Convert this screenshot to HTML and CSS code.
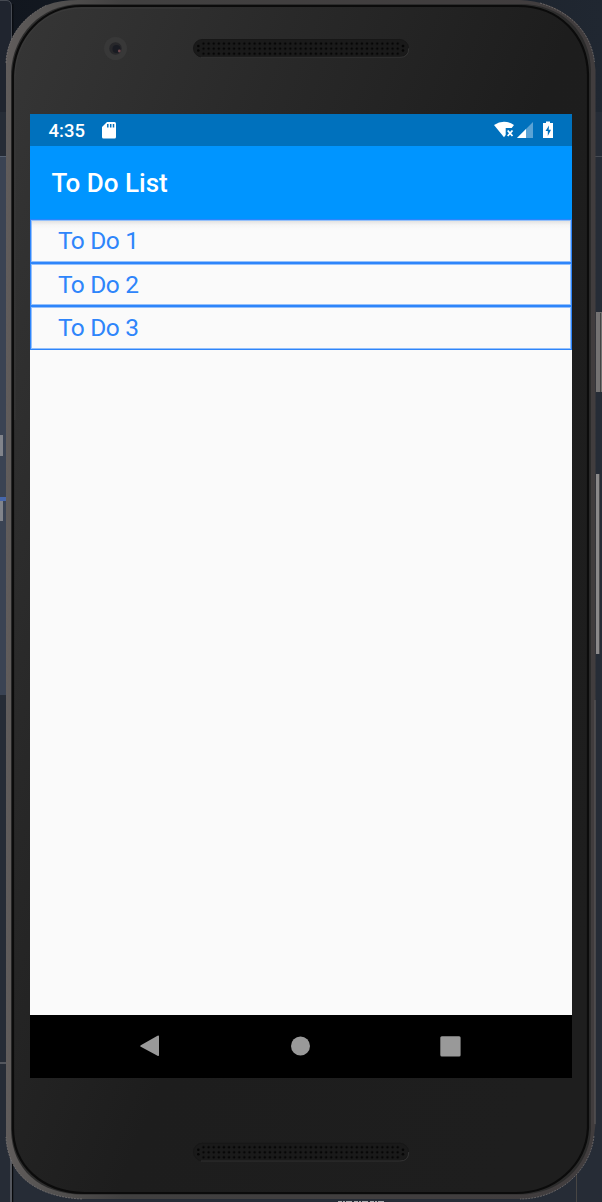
FILE: index.html
```html
<!DOCTYPE html>
<html lang="en">
<head>
<meta charset="utf-8">
<title>To Do List</title>
<link rel="stylesheet" href="styles.css">
</head>
<body>
<div class="stage">
  <svg class="backdrop" width="602" height="1202" viewBox="0 0 602 1202" aria-hidden="true">
    <defs>
      <linearGradient id="face" x1="0" y1="0" x2="1" y2=".8">
        <stop offset="0" stop-color="#363636"/><stop offset=".3" stop-color="#292929"/><stop offset=".6" stop-color="#1d1d1d"/><stop offset="1" stop-color="#1e1e1e"/>
      </linearGradient>
      <linearGradient id="rim" x1="0" y1="0" x2="1" y2="0">
        <stop offset="0" stop-color="#605c5b"/><stop offset=".06" stop-color="#565453"/><stop offset=".2" stop-color="#414040"/><stop offset="1" stop-color="#413d3e"/>
      </linearGradient>
      <linearGradient id="top" x1="0" y1="0" x2="1" y2="0">
        <stop offset="0" stop-color="#11161e"/><stop offset="1" stop-color="#202731"/>
      </linearGradient>
      <pattern id="holes" x="201" y="41" width="5.11" height="5.05" patternUnits="userSpaceOnUse">
        <circle cx="2.5" cy="2.5" r="1.3" fill="#060606"/>
      </pattern>
      <g id="speaker">
        <rect x="193.5" y="39.5" width="215" height="17.5" rx="8.7" fill="#1a1a1a" stroke="#171717"/>
        <path d="M201 57.3h199q8.700 0 8.700-9" fill="none" stroke="#3a3a3a" stroke-width=".8"/>
        <rect x="201" y="41" width="199.200" height="15.150" fill="url(#holes)"/>
        <g fill="#060606"><circle cx="198.300" cy="46" r="1.300"/><circle cx="198.300" cy="50.500" r="1.300"/><circle cx="403" cy="46" r="1.300"/><circle cx="403" cy="50.500" r="1.300"/></g>
      </g>
    </defs>
    <rect width="602" height="1202" fill="#262c36"/>
    <rect width="602" height="112" fill="url(#top)"/>
    <path d="M0 0H8Q12 1 12 7V112H0z" fill="#20252f"/>
    <path d="M0 .5H7Q11.500 1 11.500 7V60" fill="none" stroke="#464a52"/>
    <path d="M12.800 4V60" stroke="#07090c"/>
    <rect y="156" width="6" height="539" fill="#3a4353"/>
    <rect y="156" width="6" height="1" fill="#566070"/>
    <rect y="435" width="3" height="21" fill="#81848b"/>
    <rect y="497" width="6" height="4" fill="#4767ab"/>
    <rect y="501" width="3" height="20" fill="#81848b"/>
    <rect y="1062" width="6" height="2" fill="#53565d"/>
    <path d="M11 1155V1202" stroke="#53565d" stroke-width="2"/>
    <path d="M12.700 1160V1202" stroke="#000"/>
    <rect x="595" y="156" width="7" height="1" fill="#464a52"/>
    <rect x="596" y="312" width="6" height="80" fill="#747272"/>
    <rect x="600" y="313" width="1" height="79" fill="#444"/>
    <rect x="596" y="474" width="4" height="180" fill="#8b898a"/>
    <rect x="599" y="474" width="1" height="180" fill="#4a4a4c"/>
    <path d="M576.500 1170V1202" stroke="#484644"/>
    <path d="M338 1201.500h46" stroke="#a9abae" stroke-dasharray="4 1 2 1 6 2"/>
    <path d="M6 63C7 38 22 17 47 5Q60 0 78 0H520C558 1 591 25 594.500 62L595.500 70V1124L594 1136C590 1172 558 1199 520 1199H82C38 1197 8 1177 6 1137Z" fill="url(#rim)"/>
    <g fill="none" stroke="#85817f" stroke-dasharray="2 1" opacity=".6">
      <path d="M6 63C7 38 22 17 47 5"/>
      <path d="M540 3C570 12 591 32 594.500 62"/>
      <path d="M594 1136C590 1172 558 1199 520 1199"/>
      <path d="M82 1199C38 1197 8 1177 6 1137"/>
    </g>
    <path d="M595 700V1124" stroke="#5f5c5d"/>
    <path d="M11 72C13 35 40 5 80 4H520C562 4 590 32 591 70V1130C589 1168 558 1194.500 520 1194.500H82C40 1194 12 1170 11 1130Z" fill="#2c2c2c"/>
    <path d="M13 76C14 38 42 6 82 6H518C560 6 587 36 588 74V1128C586 1166 554 1193 516 1193H84C42 1192 13 1166 13 1128Z" fill="url(#face)" stroke="#0b0b0b" stroke-width="2.200"/>
    <path d="M14.900 420V76C16 39 43 8 82 8H200" fill="none" stroke="#3c3c3c" stroke-width=".8"/>
    <circle cx="115.500" cy="48.500" r="11.500" fill="#383838"/>
    <circle cx="115.500" cy="48.500" r="6.200" fill="#27272a"/>
    <circle cx="116.500" cy="49" r="4" fill="#191b22"/>
    <circle cx="119.300" cy="51" r="1.400" fill="#70484d"/>
    <use href="#speaker"/>
    <use href="#speaker" y="1103.700"/>
  </svg>
  <main class="screen">
    <header class="status">
      <span class="time">4:35</span>
      <svg class="sd" width="14" height="17" viewBox="0 0 14 17"><path d="M5 0H12.500Q14 0 14 1.500V15Q14 16.500 12.500 16.500H1.500Q0 16.500 0 15V5Z" fill="#fff"/><path d="M5.800 2v3.500M8.700 2v3.500M11.500 2v3.500" stroke="#0071bd" stroke-width="1.500"/></svg>
      <svg class="signals" width="60" height="18" viewBox="0 0 60 18">
        <path d="M0 4Q10-2.700 20 4L17.700 7H11.700V14L10 16.200Z" fill="#fff"/>
        <path d="M13.700 9.500L18.500 15M18.500 9.500L13.700 15" stroke="#fff" stroke-width="1.800"/>
        <path d="M39 1V17H23Z" fill="#5ba3d5"/><path d="M32 8V17H23Z" fill="#fff"/>
        <path d="M52 .500h4v1.500h3V17H49V2h3Z" fill="#fff"/><path d="M55 4.500L51.500 10h2.300V15L57 8.800H54.700Z" fill="#0071bd"/>
      </svg>
    </header>
    <h1 class="title">To Do List</h1>
    <ul class="list">
      <li class="item first">To Do 1</li>
      <li class="item second">To Do 2</li>
      <li class="item third">To Do 3</li>
    </ul>
    <nav class="nav">
      <svg width="20" height="22" viewBox="0 0 20 22"><path d="M.8 10.200L17.500.8Q19 0 19 1.500V20Q19 21.500 17.500 20.700L.8 11.800Q-.4 11 .8 10.200Z" fill="#999"/></svg>
      <svg width="20" height="20" viewBox="0 0 20 20"><circle cx="10.500" cy="10" r="9.500" fill="#999"/></svg>
      <svg width="21" height="21" viewBox="0 0 21 21"><rect x=".3" y=".3" width="20.300" height="20.300" rx="1.500" fill="#999"/></svg>
    </nav>
  </main>
</div>
</body>
</html>
```
FILE: styles.css
```css
body { margin: 0; font-family: Roboto, sans-serif; }
.stage { position: relative; box-sizing: border-box; width: 602px; height: 1202px; padding: 114px 30px 124px; overflow: hidden; }
.backdrop { position: absolute; left: 0; top: 0; }
.screen { position: relative; display: flex; flex-direction: column; height: 964px; background: #fafafa; }
.status { display: flex; align-items: center; box-sizing: border-box; height: 32px; padding: 0 18px 0 18.5px; background: #0071bd; color: #fff; }
.time { width: 53.5px; font-size: 18.5px; font-weight: 500; line-height: 32px; padding-top: 1px; }
.signals { margin-left: auto; }
.title { box-sizing: border-box; height: 73px; margin: 0; padding: 1px 21.5px 0; background: #0095ff; color: #fff; font-size: 26px; font-weight: 500; line-height: 73px; }
.list { flex: 1; margin: 0; padding: 0; list-style: none; color: #2e85fa; font-size: 24.5px; letter-spacing: -.6px; word-spacing: .6px; }
.item { box-sizing: border-box; padding-left: 27px; border: 1px solid #2e85fa; box-shadow: inset 0 0 0 1px #94c0fb; line-height: 42px; }
.first { height: 44px; background: linear-gradient(#dedede, #f5f5f5 5px, #fafafa 9px); }
.second { height: 43px; }
.third { height: 44px; }
.nav { display: flex; align-items: center; justify-content: space-between; box-sizing: border-box; height: 63px; padding: 0 111px 1px 110px; background: #000; }
```
